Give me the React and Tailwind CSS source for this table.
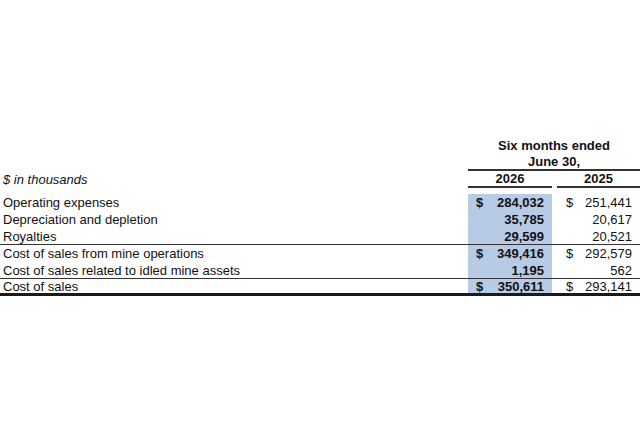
import React from 'react';

const rows = [
  { label: 'Operating expenses', cur: '284,032', prev: '251,441', dollar: true },
  { label: 'Depreciation and depletion', cur: '35,785', prev: '20,617' },
  { label: 'Royalties', cur: '29,599', prev: '20,521', line: true },
  { label: 'Cost of sales from mine operations', cur: '349,416', prev: '292,579', dollar: true },
  { label: 'Cost of sales related to idled mine assets', cur: '1,195', prev: '562', line: true },
  { label: 'Cost of sales', cur: '350,611', prev: '293,141', dollar: true, total: true },
];

const Row = ({ row }) => {
  const border = row.total
    ? 'border-b-[3px] border-[#1a1a1a]'
    : row.line
      ? 'border-b border-[#333]'
      : '';
  return (
    <div className={`flex h-[17px] items-center ${border}`}>
      <div className="flex-1 pl-[3px]">{row.label}</div>
      <div className="w-[84px] h-full bg-[#b8cbe6] flex items-center justify-between pl-[8px] pr-[8px] font-bold">
        <span>{row.dollar ? '$' : ''}</span>
        <span>{row.cur}</span>
      </div>
      <div className="w-[5px]" />
      <div className="w-[83px] flex items-center justify-between pl-[9px] pr-[8px]">
        <span>{row.dollar ? '$' : ''}</span>
        <span>{row.prev}</span>
      </div>
    </div>
  );
};

const App = () => {
  return (
    <div
      className="w-[640px] h-[440px] bg-white text-[13px] text-[#111] leading-none overflow-hidden"
      style={{ fontFamily: '"Liberation Sans", Arial, sans-serif' }}
    >
      <div className="pt-[137px]">
        {/* column header */}
        <div className="flex h-[17px] items-center">
          <div className="flex-1" />
          <div className="w-[172px] text-center font-bold">Six months ended</div>
        </div>
        <div className="flex h-[17px]">
          <div className="flex-1" />
          <div className="w-[172px] flex items-center justify-center font-bold border-b-2 border-[#333]">
            June 30,
          </div>
        </div>
        <div className="flex h-[17px]">
          <div className="flex-1 pl-[3px] italic flex items-center">$ in thousands</div>
          <div className="w-[84px] flex items-center justify-center font-bold border-b-2 border-[#333]">2026</div>
          <div className="w-[5px]" />
          <div className="w-[83px] flex items-center justify-center font-bold border-b-2 border-[#333]">2025</div>
        </div>
        <div className="flex h-[6px]" />

        {rows.map((row) => (
          <Row key={row.label} row={row} />
        ))}
      </div>
    </div>
  );
};

export default App;
